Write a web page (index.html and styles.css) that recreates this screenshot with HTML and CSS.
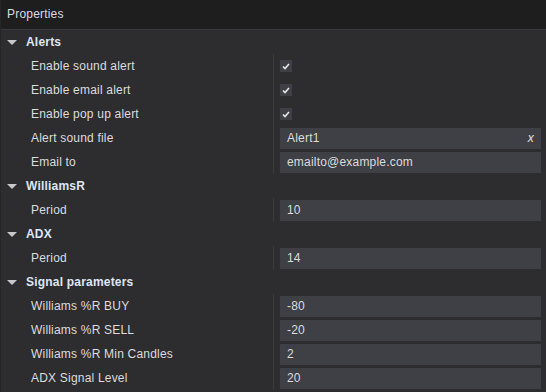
FILE: index.html
```html
<!DOCTYPE html>
<html lang="en">
  <head>
    <meta charset="UTF-8" />
    <title>Properties</title>
    <link rel="stylesheet" href="styles.css">
  </head>
  <body>
    <div class="panel">
      <div class="title">Properties</div>

      <div class="group">
        <div class="group-head"><span class="arrow"></span>Alerts</div>
        <div class="rows">
          <div class="row">
            <div class="label">Enable sound alert</div>
            <div class="value"><span class="check"><svg width="8" height="7" viewBox="0 0 8 7"><path d="M1 3.5 L3 5.5 L7 1" stroke="#e8e8e8" stroke-width="1.6" fill="none"/></svg></span></div>
          </div>
          <div class="row">
            <div class="label">Enable email alert</div>
            <div class="value"><span class="check"><svg width="8" height="7" viewBox="0 0 8 7"><path d="M1 3.5 L3 5.5 L7 1" stroke="#e8e8e8" stroke-width="1.6" fill="none"/></svg></span></div>
          </div>
          <div class="row">
            <div class="label">Enable pop up alert</div>
            <div class="value"><span class="check"><svg width="8" height="7" viewBox="0 0 8 7"><path d="M1 3.5 L3 5.5 L7 1" stroke="#e8e8e8" stroke-width="1.6" fill="none"/></svg></span></div>
          </div>
          <div class="row">
            <div class="label">Alert sound file</div>
            <div class="value"><div class="box">Alert1<span class="clear">x</span></div></div>
          </div>
          <div class="row">
            <div class="label">Email to</div>
            <div class="value"><div class="box">emailto@example.com</div></div>
          </div>
        </div>
      </div>

      <div class="group">
        <div class="group-head"><span class="arrow"></span>WilliamsR</div>
        <div class="rows">
          <div class="row">
            <div class="label">Period</div>
            <div class="value"><div class="box">10</div></div>
          </div>
        </div>
      </div>

      <div class="group">
        <div class="group-head"><span class="arrow"></span>ADX</div>
        <div class="rows">
          <div class="row">
            <div class="label">Period</div>
            <div class="value"><div class="box">14</div></div>
          </div>
        </div>
      </div>

      <div class="group">
        <div class="group-head"><span class="arrow"></span>Signal parameters</div>
        <div class="rows">
          <div class="row">
            <div class="label">Williams %R BUY</div>
            <div class="value"><div class="box">-80</div></div>
          </div>
          <div class="row">
            <div class="label">Williams %R SELL</div>
            <div class="value"><div class="box">-20</div></div>
          </div>
          <div class="row">
            <div class="label">Williams %R Min Candles</div>
            <div class="value"><div class="box">2</div></div>
          </div>
          <div class="row">
            <div class="label">ADX Signal Level</div>
            <div class="value"><div class="box">20</div></div>
          </div>
        </div>
      </div>
    </div>
  </body>
</html>
```

FILE: styles.css
```css
body {
  margin: 0;
  background-color: #2d2d30;
  font-family: "Liberation Sans", Arial, sans-serif;
  font-size: 12px;
  letter-spacing: 0.2px;
  color: #dcdcdc;
}
.panel {
  width: 546px;
  height: 392px;
  overflow: hidden;
  border-left: 1px solid #252526;
  box-sizing: border-box;
}
.title {
  height: 29px;
  line-height: 28px;
  padding-left: 6px;
  background-color: #1e1e1e;
  border-bottom: 1px solid #3a3a3d;
  color: #d8dce2;
}
.group-head {
  height: 24px;
  display: flex;
  align-items: center;
  font-weight: bold;
  color: #dfe6f2;
  padding-left: 6px;
}
.arrow {
  width: 0;
  height: 0;
  border-left: 5px solid transparent;
  border-right: 5px solid transparent;
  border-top: 5px solid #c8c8c8;
  margin-right: 9px;
}
.row {
  display: flex;
  height: 24px;
}
.label {
  width: 242px;
  padding-left: 30px;
  display: flex;
  align-items: center;
  border-right: 1px solid #3a3a3d;
}
.value {
  flex: 1;
  display: flex;
  align-items: center;
  padding-left: 6px;
  padding-right: 5px;
}
.check {
  width: 12px;
  height: 12px;
  background-color: #3f3f46;
  display: flex;
  align-items: center;
  justify-content: center;
}
.box {
  flex: 1;
  height: 21px;
  line-height: 21px;
  background-color: #3f3f46;
  padding-left: 7px;
  display: flex;
  justify-content: space-between;
}
.clear {
  font-style: italic;
  padding-right: 7px;
  color: #e0e0e0;
}
```
